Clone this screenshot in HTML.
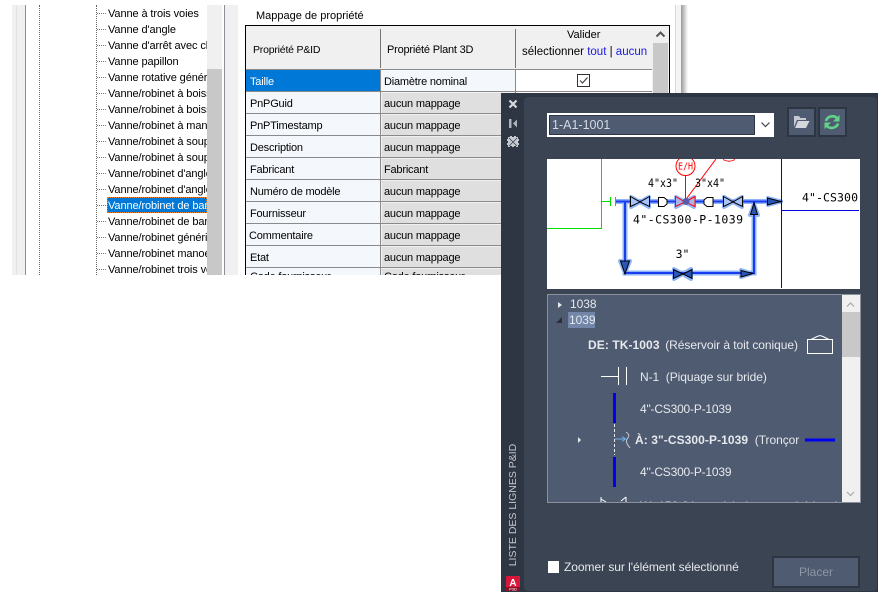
<!DOCTYPE html>
<html><head><meta charset="utf-8"><style>
html,body{margin:0;padding:0;background:#fff;width:893px;height:607px;overflow:hidden}
*{box-sizing:border-box}
body{font-family:"Liberation Sans",sans-serif;font-size:11px;letter-spacing:-.2px;color:#000;position:relative}
.a{position:absolute}
.t{position:absolute;white-space:nowrap;line-height:16px;height:16px}
.l{color:#e6e9ee;font-size:12px;letter-spacing:-.05px}
.b{font-weight:bold;letter-spacing:.08px}
.li .t{letter-spacing:-.1px}
.row{position:absolute;left:246px;width:406px;height:22px}
.c1,.c2,.c3{position:absolute;top:0;height:22px;border-bottom:1px solid #8a8a8a;line-height:24px;white-space:nowrap;overflow:hidden}
.c1{left:0;width:135px;background:#f4f7fc;padding-left:4px;border-right:1px solid #8a8a8a}
.c2{left:135px;width:135px;background:#dfdfdf;padding-left:3px;border-right:1px solid #8a8a8a;box-shadow:inset 1px 1px 0 #f0f0f0}
.c3{left:270px;width:136px;background:#fff}
.last .c1,.last .c2{line-height:18px}
</style></head><body>

<!-- left panel -->
<div class="a" style="left:0;top:5px;width:893px;height:270px;overflow:hidden">
  <div class="a" style="left:12px;top:0;width:13px;height:270px;background:#f0f0f0;border-left:0"></div>
  <div class="a" style="left:16px;top:0;width:1px;height:270px;background:#e2e2e2"></div>
  <div class="a" style="left:25px;top:0;width:1px;height:270px;background:#8c8f96"></div>
  <div class="a" style="left:39px;top:0;width:0;height:270px;border-left:1px dotted #666"></div>
  <div class="a" style="left:96px;top:0;width:0;height:270px;border-left:1px dotted #666"></div>
  <div class="a" style="left:207px;top:0;width:15px;height:270px;background:#f0f0f0"></div>
  <div class="a" style="left:207px;top:64px;width:15px;height:206px;background:#c8c8c8"></div>
  <div class="a" style="left:224px;top:0;width:1px;height:270px;background:#8c8f96"></div>
  <div class="a" style="left:225px;top:0;width:13px;height:270px;background:#f0f0f0"></div>
</div>
<div class="a li" style="left:97px;top:0;width:110px;height:275px;overflow:hidden">
<svg class="a" style="left:0;top:0" width="10" height="275"><g stroke="#777" stroke-dasharray="1 1"><path d="M0 13.5H9M0 29.5H9M0 45.5H9M0 61.5H9M0 77.5H9M0 93.5H9M0 109.5H9M0 125.5H9M0 141.5H9M0 157.5H9M0 173.5H9M0 189.5H9M0 205.5H9M0 221.5H9M0 237.5H9M0 253.5H9M0 269.5H9"/></g></svg>
<div class="a" style="left:10px;top:197px;width:100px;height:16px;background:#0078d7;border:1px dotted #f08020"></div>
<div class="t" style="left:11px;top:6px">Vanne à trois voies</div>
<div class="t" style="left:11px;top:22px">Vanne d'angle</div>
<div class="t" style="left:11px;top:38px">Vanne d'arrêt avec clapet</div>
<div class="t" style="left:11px;top:54px">Vanne papillon</div>
<div class="t" style="left:11px;top:70px">Vanne rotative générique</div>
<div class="t" style="left:11px;top:86px">Vanne/robinet à boisseau</div>
<div class="t" style="left:11px;top:102px">Vanne/robinet à boisseau</div>
<div class="t" style="left:11px;top:118px">Vanne/robinet à manchon</div>
<div class="t" style="left:11px;top:134px">Vanne/robinet à soupape</div>
<div class="t" style="left:11px;top:150px">Vanne/robinet à soupape</div>
<div class="t" style="left:11px;top:166px">Vanne/robinet d'angle</div>
<div class="t" style="left:11px;top:182px">Vanne/robinet d'angle</div>
<div class="t" style="left:11px;top:198px;color:#fff">Vanne/robinet de barrage</div>
<div class="t" style="left:11px;top:214px">Vanne/robinet de barrage</div>
<div class="t" style="left:11px;top:230px">Vanne/robinet générique</div>
<div class="t" style="left:11px;top:246px">Vanne/robinet manoeuvre</div>
<div class="t" style="left:11px;top:262px">Vanne/robinet trois voies</div>
</div>

<div class="t" style="left:256px;top:8px;letter-spacing:0">Mappage de propriété</div>

<!-- table -->
<div class="a" style="left:245px;top:25px;width:425px;height:250px;border:1px solid #000;border-width:1px 1px 0 1px;overflow:hidden;background:#fff"></div>
<div class="a" style="left:246px;top:26px;width:406px;height:43px;background:#f0f0f0"></div>
<div class="a" style="left:380px;top:29px;width:1px;height:39px;background:#777"></div>
<div class="a" style="left:515px;top:29px;width:1px;height:39px;background:#777"></div>
<div class="a" style="left:246px;top:69px;width:406px;height:1px;background:#8a8a8a"></div>
<div class="t" style="left:253px;top:42px;font-size:10.5px">Propriété P&amp;ID</div>
<div class="t" style="left:387px;top:42px">Propriété Plant 3D</div>
<div class="t" style="left:567px;top:27px;letter-spacing:0">Valider</div>
<div class="t" style="left:522px;top:44px;font-size:11.5px;letter-spacing:0">sélectionner <span style="color:#1a1ae0">tout</span> | <span style="color:#1a1ae0">aucun</span></div>
<div class="a" style="left:652px;top:26px;width:17px;height:249px;background:#f0f0f0"></div>
<div class="a" style="left:653px;top:43px;width:15px;height:232px;background:#c8c8c8"></div>
<svg class="a" style="left:652px;top:26px" width="17" height="17"><path d="M4.5 10.5L8.5 6.5L12.5 10.5" fill="none" stroke="#555" stroke-width="2"/></svg>

<div class="a" style="left:246px;top:70px;width:406px;height:205px;overflow:hidden">
<div class="row" style="left:0;top:0"><div class="c1" style="background:#0078d7;color:#fff">Taille</div><div class="c2" style="background:#f4f7fc;box-shadow:none">Diamètre nominal</div><div class="c3"></div></div>
<div class="row" style="left:0;top:22px"><div class="c1">PnPGuid</div><div class="c2">aucun mappage</div><div class="c3"></div></div>
<div class="row" style="left:0;top:44px"><div class="c1">PnPTimestamp</div><div class="c2">aucun mappage</div><div class="c3"></div></div>
<div class="row" style="left:0;top:66px"><div class="c1">Description</div><div class="c2">aucun mappage</div><div class="c3"></div></div>
<div class="row" style="left:0;top:88px"><div class="c1">Fabricant</div><div class="c2">Fabricant</div><div class="c3"></div></div>
<div class="row" style="left:0;top:110px"><div class="c1">Numéro de modèle</div><div class="c2">aucun mappage</div><div class="c3"></div></div>
<div class="row" style="left:0;top:132px"><div class="c1">Fournisseur</div><div class="c2">aucun mappage</div><div class="c3"></div></div>
<div class="row" style="left:0;top:154px"><div class="c1" style="padding-left:3px">Commentaire</div><div class="c2">aucun mappage</div><div class="c3"></div></div>
<div class="row" style="left:0;top:176px"><div class="c1">Etat</div><div class="c2">aucun mappage</div><div class="c3"></div></div>
<div class="row last" style="left:0;top:198px"><div class="c1">Code fournisseur</div><div class="c2">Code fournisseur</div><div class="c3"></div></div>
</div>
<svg class="a" style="left:577px;top:74px" width="14" height="14"><rect x=".5" y=".5" width="12" height="12" fill="#fff" stroke="#333"/><path d="M3 6.5L5.5 9L10.5 3.5" fill="none" stroke="#444" stroke-width="1.2"/></svg>

<!-- right strip -->
<div class="a" style="left:675px;top:5px;width:1px;height:88px;background:#d8d8d8"></div>
<div class="a" style="left:676px;top:5px;width:5px;height:88px;background:#f4f4f4"></div>
<div class="a" style="left:681px;top:5px;width:7px;height:88px;background:linear-gradient(90deg,#9a9a9a,#fff)"></div>

<!-- palette -->
<div class="a" style="left:501px;top:93px;width:377px;height:499px;background:#2f3643"></div>
<div class="a" style="left:524px;top:97px;width:353px;height:494px;background:#3b4453;border-radius:4px"></div>

<svg class="a" style="left:505px;top:97px" width="16" height="54">
<path d="M4.500 3.500L11.500 10.500M11.500 3.500L4.500 10.500" stroke="#d6d9de" stroke-width="2.200"/>
<path d="M4 22V31H6.500V22ZM12 22.500V30.500L8 26.500Z" fill="#aeb4bd"/>
<path d="M3 40H5V39H7V40H9V39H11V40H13V42H14V44H13V46H14V48H13V50H11V49H9V50H7V49H5V50H3V48H2V46H3V44H2V42H3Z" fill="#c6cad0"/><path d="M4 41L12 49M12 41L4 49" stroke="#2f3643" stroke-width=".7"/>
</svg>

<!-- combo -->
<div class="a" style="left:547px;top:113px;width:227px;height:24px;background:#fff"></div>
<div class="a" style="left:549px;top:115px;width:206px;height:20px;background:#4f5b70;border:1px solid #2d3442;color:#d5dbe4;font-size:12.500px;line-height:18px;padding-left:2px;letter-spacing:0">1-A1-1001</div>
<svg class="a" style="left:760px;top:120px" width="12" height="10"><path d="M1.500 2.500L5.500 6.500L9.500 2.500" fill="none" stroke="#444" stroke-width="1.200"/></svg>

<div class="a" style="left:787px;top:107px;width:29px;height:30px;background:#4f5b70;border:2px solid #2d3442"></div>
<div class="a" style="left:818px;top:107px;width:29px;height:30px;background:#4f5b70;border:2px solid #2d3442"></div>
<svg class="a" style="left:793px;top:114px" width="18" height="16"><path d="M1 13V2H6L7.500 4H13V6H4L1 13Z" fill="#c6cbd2"/><path d="M2 14L5 7H16.500L13 14Z" fill="#d4d8dd"/></svg>
<svg class="a" style="left:823px;top:114px" width="18" height="16"><path d="M3 7A6.500 6 0 0 1 14 4" fill="none" stroke="#5fd38a" stroke-width="2.600"/><path d="M16.500 1V7.500H10Z" fill="#5fd38a"/><path d="M15 9.500A6.500 6 0 0 1 4 12" fill="none" stroke="#5fd38a" stroke-width="2.600"/><path d="M1.500 15V8.500H8Z" fill="#5fd38a"/></svg>

<!-- preview -->
<svg class="a" style="left:547px;top:159px;background:#fff;letter-spacing:0" width="313" height="130" viewBox="547 159 313 130">
<g fill="none" stroke="#8fb4f8" stroke-width="5">
<path d="M615 201.500H782M625 201.500V273H754V201.500"/>
</g>
<g fill="#8fb4f8" stroke="#8fb4f8" stroke-width="4" stroke-linejoin="round">
<path d="M631 197L649 207V197L631 207Z"/><path d="M676 197L694 207V197L676 207Z"/><path d="M724 197L742 207V197L724 207Z"/>
<path d="M768 198L781 201.500L768 205Z"/><path d="M754 204L750 215H758Z"/><path d="M625 273L620 261H630Z"/><path d="M741 270L752 273.500L741 277Z"/><path d="M674 269L691 279V269L674 279Z"/>
</g>
<g fill="none" stroke="#1a3cf0" stroke-width="2"><path d="M615 201.500H782M625 201.500V273H754V201.500"/></g>
<g stroke="#00e000" fill="none"><path d="M601.500 159V228.500H547M601.500 201.500H611M610.500 197V206"/><path d="M615.500 197V206" stroke="#00e000"/></g>
<g stroke="#0000e0" fill="none"><path d="M781.500 159V288M782 210.500H859"/></g>
<g stroke="#000" fill="#a8c4f8" stroke-width="1"><path d="M630.500 196.500L640 202L630.500 206.500ZM649.500 196.500L640 202L649.500 206.500Z"/><path d="M723.500 196.500L733 202L723.500 206.500ZM742.500 196.500L733 202L742.500 206.500Z"/>
<path d="M658.500 197.500H664L667 200V204L664 206.500H658.500V197.500Z" fill="#fff"/><path d="M713 197.500H707L704 200V204L707 206.500H713V197.500Z" fill="#fff"/></g>
<g stroke="#000" fill="#2a56b8" stroke-width="1"><path d="M767.500 198L781 201.500L767.500 205Z"/><path d="M754 203L750.500 214.500H757.500Z"/><path d="M625 274L620.500 261H629.500Z"/><path d="M741 270.500L753 273.500L741 277Z"/><path d="M673.500 269.500L683 274L673.500 278.500ZM692 269.500L683 274L692 278.500Z"/></g>
<g stroke="#f00" fill="none"><path d="M675.500 196.500L685 202L675.500 206.500ZM695 196.500L685 202L695 206.500Z" fill="#a8b4ea"/><circle cx="685.500" cy="166" r="9.500" fill="#fff"/><path d="M685.500 175.500V200L716 159"/><path d="M723 159.500Q729 163 735 159.500"/></g>
<circle cx="686" cy="201.500" r="3.500" fill="#5a5aa8"/>
<g font-family="'DejaVu Sans Mono','Liberation Mono',monospace" font-size="11.500" fill="#000" text-anchor="middle">
<text x="663" y="187" textLength="30" lengthAdjust="spacingAndGlyphs">4"x3"</text>
<text x="710" y="187" textLength="30" lengthAdjust="spacingAndGlyphs">3"x4"</text>
<text x="688" y="223.500" textLength="110" lengthAdjust="spacing">4"-CS300-P-1039</text>
<text x="682.500" y="258">3"</text>
<text x="830" y="201.500" textLength="56" lengthAdjust="spacing">4"-CS300</text>
<text x="685.500" y="169.500" font-size="9.500" fill="#f00" textLength="15" lengthAdjust="spacingAndGlyphs">E/H</text>
</g>
</svg>

<!-- tree -->
<div class="a" style="left:547px;top:294px;width:314px;height:209px;background:#4f5b70;border:1px solid #8a919c;overflow:hidden">
 <div class="a" style="left:294px;top:0;width:18px;height:207px;background:#f0f0f0"></div>
 <div class="a" style="left:294px;top:17px;width:18px;height:45px;background:#c8c8c8"></div>
 <svg class="a" style="left:294px;top:0" width="18" height="207"><path d="M5 11.500L8.500 8L12 11.500M5 197L8.500 200.500L12 197" fill="none" stroke="#a8a8a8" stroke-width="1.200"/></svg>
 <div class="a" style="left:20px;top:17px;width:27px;height:16px;background:#7186a8"></div>
 <div class="t l" style="left:22px;top:1px">1038</div>
 <div class="t l" style="left:20px;top:17px;padding-left:1px">1039</div>
 <div class="t l" style="left:40px;top:42px"><span class="b">DE: TK-1003</span>&nbsp;&thinsp;(Réservoir à toit conique)</div>
 <div class="t l" style="left:92px;top:74px">N-1&nbsp; (Piquage sur bride)</div>
 <div class="t l" style="left:92px;top:106px;letter-spacing:-.2px">4"-CS300-P-1039</div>
 <div class="t l" style="left:87px;top:137px"><span class="b">À: 3"-CS300-P-1039</span>&nbsp; (Tronçor</div>
 <div class="t l" style="left:92px;top:169px;letter-spacing:-.2px">4"-CS300-P-1039</div>
 <div class="t l" style="left:92px;top:203px">W- 150 (Vanne à boisseau sphérique)</div>
 <svg class="a" style="left:0;top:0" width="294" height="207" viewBox="548 295 294 207">
  <path d="M558 302L562 305L558 308Z" fill="#e6e9ee"/><path d="M556 323H562V317Z" fill="#2b2f38"/>
  <path d="M578 437L581 440L578 443Z" fill="#e6e9ee"/>
  <path d="M807.500 339.500H832.500V353.500H807.500ZM811 339.500L817 336.500L820 335.500L823 336.500L829 339.500" fill="none" stroke="#fff"/>
  <path d="M601 376.500H618M618.500 367V385M626.500 367V385" stroke="#fff" fill="none"/>
  <rect x="613" y="393" width="3" height="30" fill="#0000f0"/><rect x="613" y="457" width="3" height="30" fill="#0000f0"/>
  <path d="M614.500 424V455" stroke="#e6e9ee" stroke-dasharray="3 2"/>
  <path d="M615 439H625M622 436.500L625.500 439L622 441.500" stroke="#6cb4ee" fill="none"/>
  <path d="M626 432Q631 435 627 439Q625 442 630 448" stroke="#c5cad2" fill="none"/>
  <rect x="805" y="438.500" width="30" height="3" fill="#0000f0"/>
  <path d="M601 499L606 502M601 497V502M626 497L621 501M626 497V502" stroke="#fff" fill="none"/>
 </svg>
</div>

<!-- bottom -->
<div class="a" style="left:548px;top:561px;width:11px;height:12px;background:#fff"></div>
<div class="t l" style="left:564px;top:559px">Zoomer sur l'élément sélectionné</div>
<div class="a" style="left:772px;top:556px;width:88px;height:32px;background:#4f5b70;border:2px solid #2d3442;color:#8d96a3;text-align:center;font-size:12px;line-height:29px;letter-spacing:0">Placer</div>

<div class="a" style="left:451px;top:497px;width:124px;height:16px;line-height:16px;transform:rotate(-90deg);color:#c3c8d0;font-size:10.500px;letter-spacing:0;white-space:nowrap;text-align:center">LISTE DES LIGNES P&amp;ID</div>

<svg class="a" style="left:505px;top:575px;letter-spacing:0" width="16" height="17">
<path d="M1 1H15V16H1Z" fill="#d8173b"/><path d="M1 12H15V16H1Z" fill="#8e1028"/>
<text x="8" y="11" font-family="Liberation Sans" font-size="10" font-weight="bold" fill="#fff" text-anchor="middle">A</text>
<text x="8" y="15.500" font-family="Liberation Sans" font-size="4" fill="#fff" text-anchor="middle">P3D</text>
</svg>
</body></html>
